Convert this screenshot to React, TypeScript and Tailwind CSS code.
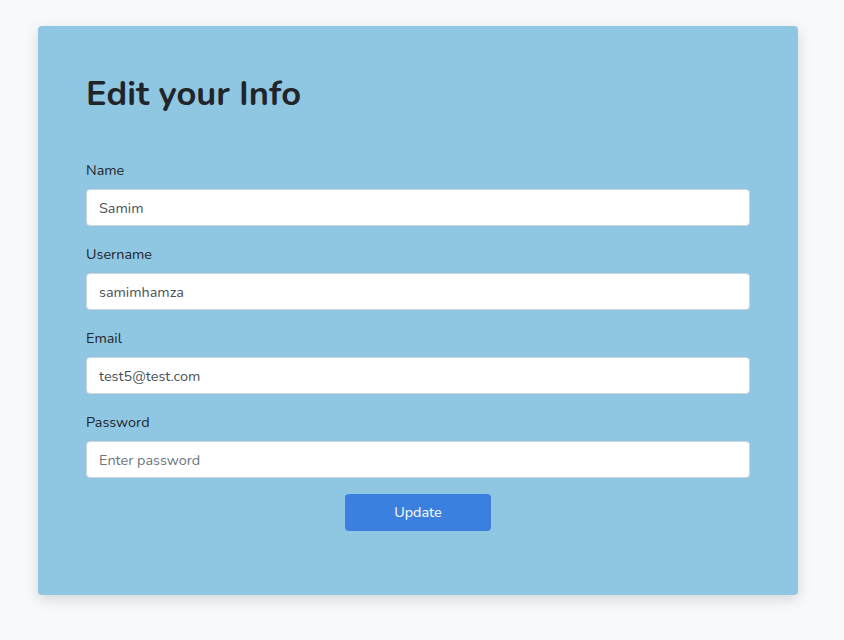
import React from 'react';

const fields = [
  { label: 'Name', value: 'Samim', type: 'text', placeholder: '' },
  { label: 'Username', value: 'samimhamza', type: 'text', placeholder: '' },
  { label: 'Email', value: 'test5@test.com', type: 'email', placeholder: '' },
  { label: 'Password', value: '', type: 'password', placeholder: 'Enter password' },
];

export default function App() {
  return (
    <div className="min-h-screen bg-[#f8f9fb] pt-[26px] font-['Nunito','Lato','Noto_Sans',sans-serif]">
      <div className="ml-[38px] w-[760px] rounded bg-[#8fc7e3] px-12 pt-[46px] pb-16 shadow-[0_4px_14px_rgba(0,0,0,0.15)]">
        <h1 className="mb-[45px] text-[34.5px] font-bold leading-[43px] text-[#212529]">Edit your Info</h1>
        <form onSubmit={(e) => e.preventDefault()} className="flex flex-col gap-[18px]">
          {fields.map((f) => (
            <div key={f.label}>
              <label className="mb-2 block text-[14.4px] leading-[21px] text-[#212529]">{f.label}</label>
              <input
                type={f.type}
                defaultValue={f.value}
                placeholder={f.placeholder}
                className="block h-[37px] w-full rounded border border-[#ced4da] bg-white px-3 text-[14.4px] text-[#495057] placeholder:text-[#6c757d] outline-none"
              />
            </div>
          ))}
        </form>
        <div className="mt-4 flex justify-center">
          <button type="button" className="h-[37px] w-[146px] rounded bg-[#3b80df] text-[14.4px] text-white">
            Update
          </button>
        </div>
      </div>
    </div>
  );
}
